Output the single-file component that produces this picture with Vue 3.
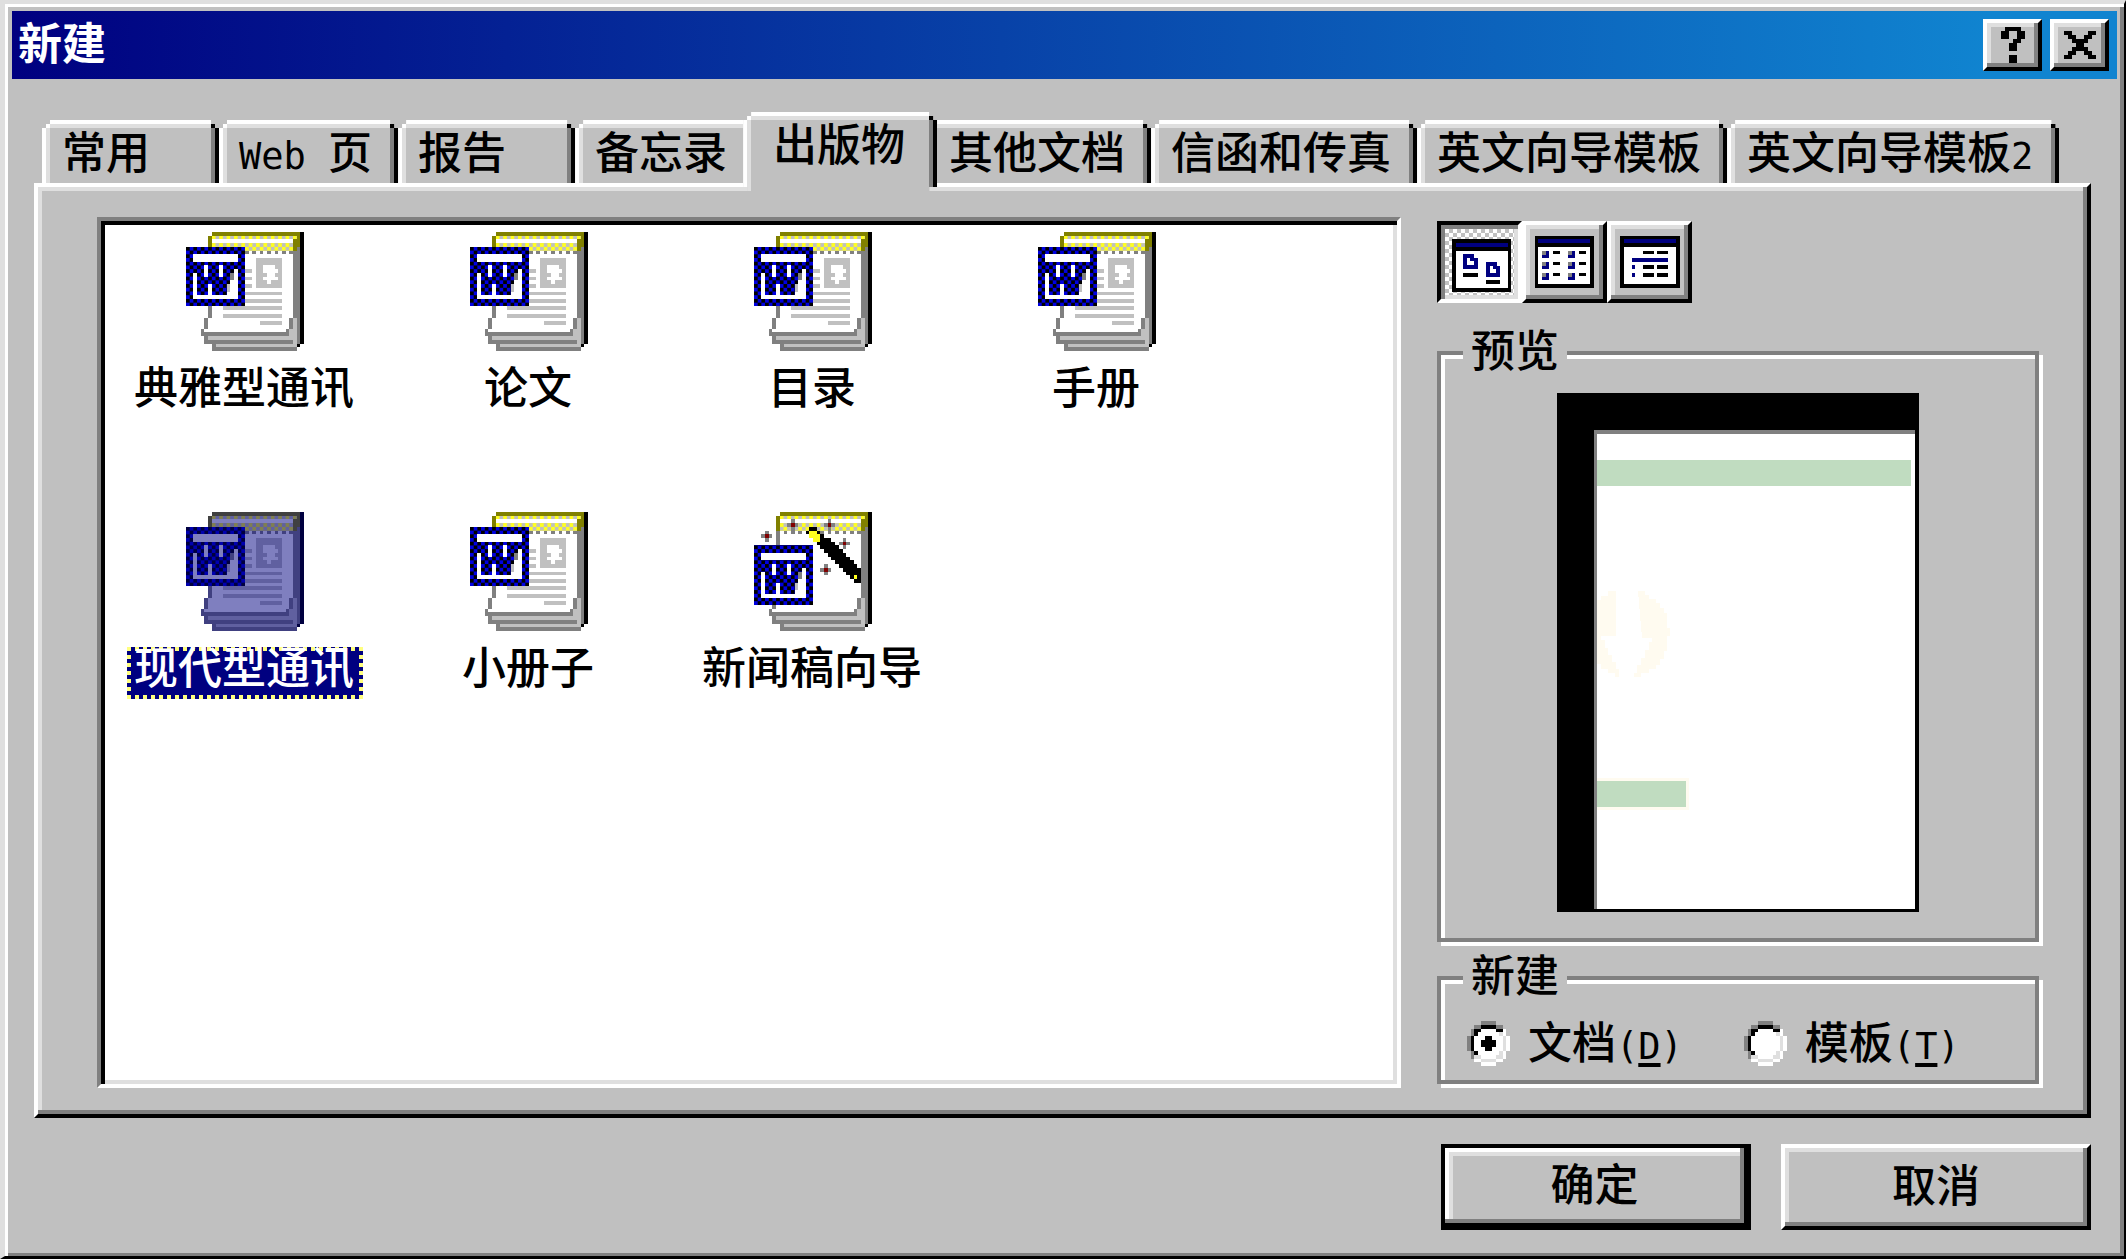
<script setup>
import { ref } from 'vue'

const tabs = ['常用', 'Web 页', '报告', '备忘录', '出版物', '其他文档', '信函和传真', '英文向导模板', '英文向导模板2']
const activeTab = ref('出版物')

const templates = [
  { name: '典雅型通讯' },
  { name: '论文' },
  { name: '目录' },
  { name: '手册' },
  { name: '现代型通讯' },
  { name: '小册子' },
  { name: '新闻稿向导', wizard: true },
]
const selected = ref('现代型通讯')
const kind = ref('doc')

// Splits a caption so that half-width runs get their own narrow face
const split = (s) => s.match(/[\x20-\x7e]+|[^\x20-\x7e]+/g).map((t) => ({ t, latin: /^[\x20-\x7e]/.test(t) }))

const textRows = [[16, 10, 2], [16, 12, 2], [16, 14, 2], [16, 16, 10], [16, 18, 10], [10, 20, 16], [10, 22, 16], [20, 24, 6]]
const stars = [[3, 6], [10, 3], [20, 3], [24, 8], [19, 15]]
const wandRows = Array.from({ length: 12 }, (_, i) => i + 7)
</script>

<template>
  <main class="dialog">
    <svg class="defs" aria-hidden="true">
      <defs>
        <pattern id="blue" width="2" height="2" patternUnits="userSpaceOnUse">
          <path fill="#0000e0" d="M0 0h2v2h-2z" />
          <path d="M0 0h1v1h-1zM1 1h1v1h-1z" />
        </pattern>
        <pattern id="yellow" width="2" height="2" patternUnits="userSpaceOnUse">
          <path fill="#c0c0c0" d="M0 0h2v2h-2z" />
          <path fill="#ffff20" d="M0 0h1v1h-1zM1 1h1v1h-1z" />
        </pattern>
        <g id="wmark">
          <path fill="url(#blue)" d="M0 4h16v16h-16z" />
          <path fill="#fff" d="M2 6h12v2h-12zM5 9h1v3h-1zM9 9h1v3h-1zM2 11h1v6h3v-3h1v3h4v-1h1v-3h1v-3h1v8h-12z" />
          <path fill="#808080" d="M12 11h1v2h-1z" />
          <path fill="#c0c0c0" d="M11 14h1v2h-1z" />
        </g>
        <g id="pad">
          <path d="M31 0h1v30h-1zM30 30h1v1h-1z" />
          <path fill="#808000" d="M7 0h24v4h-1v1h-24v-4h1z" />
          <path fill="#808080" d="M29 5h1v-1h1v26h-2zM6 5h23v18h-23zM5 23h24v3h-24zM4 26h24v2h-24zM5 28h25v2h-25zM7 30h23v2h-23z" />
          <path fill="#fff" d="M7 5h22v18h-1v3h-1v1h-22v-1h1v-3h1z" />
          <path fill="#c0c0c0" d="M29 23h1v8h-22v-1h21v-1h-23v-1h22v-2h1z" />
          <path fill="#808080" d="M28 23h1v3h-1zM27 26h1v1h-1z" />
          <path fill="url(#yellow)" d="M7 1h23v1h-23zM7 3h22v2h-22z" />
          <path fill="#fff" d="M7 2h22v1h-22z" />
          <path fill="#808080" d="M8 5h1v1h-1zM10 5h1v1h-1zM12 5h1v1h-1zM14 5h1v1h-1zM16 5h1v1h-1zM18 5h1v1h-1zM20 5h1v1h-1zM22 5h1v1h-1zM24 5h1v1h-1zM26 5h1v1h-1zM28 5h1v1h-1z" />
        </g>
      </defs>
    </svg>

    <header class="titlebar">
      <h1>新建</h1>
      <button class="cap raised" type="button" aria-label="帮助">
        <svg width="24" height="36" viewBox="0 0 6 9" shape-rendering="crispEdges"><path d="M1 0h4v1h1v2h-1v1h-1v2h-2v-2h1v-1h1v-2h-2v2h-2v-2h1zM2 7h2v2h-2z" /></svg>
      </button>
      <button class="cap raised" type="button" aria-label="关闭">
        <svg width="32" height="28" viewBox="0 0 8 7" shape-rendering="crispEdges"><path d="M0 0h2v1h1v1h2v-1h1v-1h2v1h-1v1h-1v1h-1v1h1v1h1v1h1v1h-2v-1h-1v-1h-2v1h-1v1h-2v-1h1v-1h1v-1h1v-1h-1v-1h-1v-1h-1z" /></svg>
      </button>
    </header>

    <section class="body">
      <nav class="tabs" role="tablist">
        <button v-for="t in tabs" :key="t" type="button" role="tab" class="tab" :class="{ active: t === activeTab }" :aria-selected="t === activeTab" @click="activeTab = t">
          <span v-for="p in split(t)" :key="p.t" :class="{ latin: p.latin }">{{ p.t }}</span>
        </button>
      </nav>

      <div class="panel raised">
        <ul class="list">
          <li v-for="f in templates" :key="f.name">
            <button type="button" class="file" :class="{ selected: f.name === selected }" @click="selected = f.name">
              <svg width="118" height="119" viewBox="0 0 32 32" preserveAspectRatio="none" shape-rendering="crispEdges">
                <use href="#pad" />
                <template v-if="f.wizard">
                  <g v-for="s in stars" :key="s[0]">
                    <path fill="#808080" :d="`M${s[0]} ${s[1] - 1}h1v3h-1zM${s[0] - 1} ${s[1]}h3v1h-3z`" />
                    <path fill="#800000" :d="`M${s[0]} ${s[1]}h1v1h-1z`" />
                  </g>
                  <path d="M15 4h2v1h1v1h1v1h1v1h-4v-1h-1v-1h-1v-1h1z" />
                  <rect v-for="r in wandRows" :key="r" :x="r + 9" :y="r" :width="Math.min(5, 20 - r)" height="1" />
                  <path fill="#ffff20" d="M15 5h2v1h1v2h-2v-1h-1zM27 17h1v1h-1z" />
                  <use href="#wmark" y="5" />
                </template>
                <template v-else>
                  <rect v-for="(l, i) in textRows" :key="i" fill="#c0c0c0" :x="l[0]" :y="l[1]" :width="l[2]" height="1" />
                  <path fill="#c0c0c0" d="M19 7h7v8h-7z" />
                  <path fill="#fff" d="M21 9h3v1h1v1h-1v1h1v1h-2v1h-1v-1h-1v-1h1v-1h-1z" />
                  <use href="#wmark" />
                </template>
                <path v-if="f.name === selected" fill="#000080" fill-opacity=".5" d="M7 0H32V30H31V31H30V32H7V30H5V28H4V26H5V23H6V20H0V4H6V1H7Z" />
              </svg>
              <span class="name">{{ f.name }}</span>
            </button>
          </li>
        </ul>

        <aside class="side">
          <div class="views">
            <button type="button" class="view pressed" aria-label="大图标">
              <svg width="59" height="53" viewBox="66 72 177 159" shape-rendering="crispEdges">
                <path d="M66 72h177v159h-177z" /><path fill="#000080" d="M78 84h156v12h-156z" /><path fill="#fff" d="M78 108h156v111h-156z" />
                <path fill="#000080" d="M99 117h33v12h12v33h-45zM168 141h33v12h9v33h-42z" />
                <path fill="#fff" d="M111 129h9v9h12v12h-21zM180 153h9v9h9v12h-18z" />
                <path d="M99 174h45v12h-45zM168 195h42v12h-42z" />
              </svg>
            </button>
            <button type="button" class="view raised" aria-label="列表">
              <svg width="59" height="52" viewBox="312 63 177 156" shape-rendering="crispEdges">
                <path d="M312 63h177v156h-177z" /><path fill="#000080" d="M321 72h156v12h-156z" /><path fill="#fff" d="M321 96h156v111h-156z" />
                <template v-for="y in [108, 141, 174]" :key="y">
                  <template v-for="x in [333, 411]" :key="x">
                    <rect :x="x" :y="y" width="21" height="21" fill="#000080" />
                    <rect :x="x" :y="y" width="12" height="12" fill="#808080" />
                    <rect :x="x + 33" :y="y" width="21" height="10" />
                  </template>
                </template>
              </svg>
            </button>
            <button type="button" class="view raised" aria-label="详细资料">
              <svg width="60" height="52" viewBox="564 63 180 156" shape-rendering="crispEdges">
                <path d="M564 63h180v156h-180z" /><path fill="#000080" d="M576 72h156v12h-156z" /><path fill="#fff" d="M576 96h156v111h-156z" />
                <path fill="#000080" d="M600 129h108v12h-108zM600 150h9v12h-9zM600 174h9v12h-9z" />
                <path d="M633 108h33v10h-33zM675 108h33v10h-33zM633 150h33v12h-33zM675 150h33v12h-33zM633 174h33v12h-33zM675 174h33v12h-33z" />
              </svg>
            </button>
          </div>

          <fieldset class="group preview">
            <legend>预览</legend>
            <div class="frame">
              <div class="paper">
                <div class="bar wide"></div>
                <svg class="mark" width="73" height="86" viewBox="0 0 73 86" shape-rendering="crispEdges">
                  <path fill="#fffbf0" d="M0 9h4v-4h7v-5h8v45h-15v4h4v8h3v7h4v7h4v7h3v8h-4v-4h-7v-4h-7v-5h-4zM41 0h7v4h4v4h7v4h4v5h4v5h3v15h3v8h-3v15h-3v8h-4v6h-4v4h-7v4h-8v4h-7v-4h3v-8h4v-7h4v-8h4v-8h3v-4h-10z" />
                </svg>
                <div class="bar short"></div>
              </div>
            </div>
          </fieldset>

          <fieldset class="group kind">
            <legend>新建</legend>
            <div class="choices">
              <label v-for="o in [{ v: 'doc', t: '文档', k: 'D' }, { v: 'tpl', t: '模板', k: 'T' }]" :key="o.v">
                <span class="radio">
                  <input v-model="kind" type="radio" name="kind" :value="o.v" />
                  <svg width="43" height="45" viewBox="0 0 12 12" preserveAspectRatio="none" shape-rendering="crispEdges" aria-hidden="true">
                    <path fill="#fff" d="M4 1h4v1h2v2h1v4h-1v2h-2v1h-4v-1h-2v-2h-1v-4h1v-2h2z" />
                    <path fill="#fff" d="M10 2h1v2h1v4h-1v2h-1v1h-2v1h-4v-1h-2v-1h8z" />
                    <path fill="#808080" d="M4 0h4v1h2v1h-8v2h-1v4h1v2h-1v-2h-1v-4h1v-2h1v-1h2z" />
                    <path d="M4 1h4v1h2v1h-2v-1h-4v1h-1v1h-1v4h-1v-4h1v-2h2zM2 8h1v1h-1z" />
                    <path fill="#dfdfdf" d="M9 3h1v1h1v4h-1v2h-2v1h-4v-1h-2v-1h2v1h4v-1h1v-1h1v-4h-1z" />
                    <path v-if="kind === o.v" d="M5 4h2v1h1v2h-1v1h-2v-1h-1v-2h1z" />
                  </svg>
                </span>
                <span>{{ o.t }}<span class="latin">(<u>{{ o.k }}</u>)</span></span>
              </label>
            </div>
          </fieldset>
        </aside>
      </div>

      <footer class="actions">
        <button type="button" class="action default"><span>确定</span></button>
        <button type="button" class="action raised"><span>取消</span></button>
      </footer>
    </section>
  </main>
</template>

<style>
body {
  margin: 0;
  background: #c0c0c0;
}
</style>

<style scoped>
.dialog,
.dialog * {
  box-sizing: border-box;
}
.dialog {
  display: flex;
  flex-direction: column;
  min-height: 100vh;
  padding: 7px 7px 26px;
  border: solid;
  border-width: 4px 2px 3px 5px;
  border-color: #dfdfdf #000 #000 #dfdfdf;
  box-shadow: inset 3px 3px #fff, inset -4px -3px #808080;
  background: #c0c0c0;
  color: #000;
  font: 500 44px/44px "Noto Sans CJK SC", sans-serif;
}
.defs {
  position: absolute;
  width: 0;
  height: 0;
}
button {
  margin: 0;
  padding: 0;
  border: 0;
  border-radius: 0;
  background: #c0c0c0;
  color: inherit;
  font: inherit;
}
svg {
  display: block;
  flex: none;
}
.raised {
  border: 4px solid;
  border-color: #fff #000 #000 #fff;
  box-shadow: inset -4px -4px #808080, inset 4px 4px #dfdfdf;
}
.latin {
  font-family: "DejaVu Sans Mono", monospace;
  font-size: 37px;
  line-height: 0;
  white-space: pre;
}

.titlebar {
  display: flex;
  align-items: center;
  height: 68px;
  padding: 0 8px 0 6px;
  background: linear-gradient(90deg, #000080, #1084d0 94%);
}
.titlebar h1 {
  flex: 1;
  margin: 0;
  padding-bottom: 8px;
  color: #fff;
  font-size: 44px;
  font-weight: 700;
}
.cap {
  display: flex;
  align-items: center;
  justify-content: center;
  width: 59px;
  height: 52px;
  margin-left: 8px;
}

.body {
  flex: 1;
  display: flex;
  flex-direction: column;
  margin: 33px 26px 0 22px;
}
.tabs {
  display: flex;
  align-items: flex-end;
  padding-left: 8px;
}
.tab {
  position: relative;
  min-width: 177px;
  height: 63px;
  padding: 4px 22px 12px 16px;
  border: solid;
  border-width: 4px 4px 0;
  border-color: #fff #000 #fff #fff;
  box-shadow: inset -4px 0 #808080, inset 4px 4px #dfdfdf;
  clip-path: polygon(0 8px, 4px 8px, 4px 4px, 8px 4px, 8px 0, calc(100% - 8px) 0, calc(100% - 8px) 4px, calc(100% - 4px) 4px, calc(100% - 4px) 8px, 100% 8px, 100% 100%, 0 100%);
  line-height: 40px;
  text-align: left;
  white-space: nowrap;
}
.tab::before,
.tab::after {
  content: "";
  position: absolute;
  top: 0;
  left: 0;
  width: 4px;
  height: 4px;
  background: #fff;
}
.tab::after {
  left: auto;
  right: 0;
  background: #000;
}
.tab.active {
  z-index: 1;
  height: 79px;
  margin: 0 -8px -8px -10px;
  padding: 4px 28px 28px 26px;
  clip-path: polygon(0 8px, 4px 8px, 4px 4px, 8px 4px, 8px 0, calc(100% - 8px) 0, calc(100% - 8px) 4px, calc(100% - 4px) 4px, calc(100% - 4px) 8px, 100% 8px, 100% calc(100% - 4px), calc(100% - 8px) calc(100% - 4px), calc(100% - 8px) 100%, 4px 100%, 4px calc(100% - 4px), 0 calc(100% - 4px));
}
.panel {
  flex: 1;
  display: flex;
  gap: 36px;
  padding: 30px 44px 26px 59px;
}
.list {
  flex: 1;
  display: grid;
  grid-template-columns: repeat(auto-fill, 284px);
  grid-auto-rows: 280px;
  margin: 0;
  padding: 0 0 0 2px;
  border: 4px solid;
  border-color: #808080 #fff #fff #808080;
  box-shadow: inset 4px 4px #000, inset -4px -4px #dfdfdf;
  background: #fff;
  list-style: none;
}
.file {
  display: flex;
  flex-direction: column;
  align-items: center;
  width: 100%;
  padding-top: 11px;
  background: none;
}
.name {
  height: 52px;
  margin-top: 16px;
  padding: 0 9px 0 7px;
  line-height: 36px;
}
.selected .name {
  background:
    repeating-linear-gradient(90deg, #ffff80 0 4px, #000080 4px 8px) top / 100% 4px no-repeat,
    repeating-linear-gradient(90deg, #ffff80 0 4px, #000080 4px 8px) bottom / 100% 4px no-repeat,
    repeating-linear-gradient(#ffff80 0 4px, #000080 4px 8px) left / 4px 100% no-repeat,
    repeating-linear-gradient(#ffff80 0 4px, #000080 4px 8px) right / 4px 100% no-repeat,
    #000080;
  color: #fff;
}

.side {
  display: flex;
  flex-direction: column;
  flex: none;
  width: 606px;
  padding: 4px 4px 4px 0;
}
.views {
  display: flex;
  margin-bottom: 28px;
}
.view {
  display: flex;
  align-items: center;
  justify-content: center;
  width: 85px;
  height: 82px;
}
.pressed {
  padding: 6px 0 0 4px;
  border: 4px solid;
  border-color: #000 #fff #fff #000;
  box-shadow: inset 4px 4px #808080, inset -4px -4px #dfdfdf;
  background: repeating-conic-gradient(#c0c0c0 0 25%, #fff 0 50%) 0 0 / 8px 8px;
}
.group {
  min-width: 0;
  margin: 0;
  padding: 0 22px;
  border: 4px solid #808080;
  box-shadow: inset 4px 4px #fff, 4px 4px #fff;
}
legend {
  padding: 0 8px 10px;
  background: #c0c0c0;
  line-height: 34px;
}
.preview {
  flex: 1;
  margin-bottom: 14px;
}
.frame {
  width: 362px;
  height: 519px;
  margin: 18px auto 26px;
  padding: 37px 4px 3px 37px;
  background: #000;
}
.paper {
  height: 100%;
  padding-top: 26px;
  border: solid #808080;
  border-width: 4px 0 0 3px;
  background: #fff;
}
.bar {
  height: 26px;
  background: #c0dcc0;
}
.wide {
  margin-right: 4px;
}
.mark {
  margin: 105px 0 104px;
}
.short {
  width: 89px;
  box-shadow: 0 0 0 3px #fffbf0;
  clip-path: inset(-3px -3px -3px 0);
}
.choices {
  display: flex;
  gap: 61px;
  padding: 21px 0 14px 4px;
}
.choices label {
  display: flex;
  gap: 18px;
  height: 45px;
  line-height: 38px;
  white-space: nowrap;
}
.radio {
  display: grid;
}
.radio > * {
  grid-area: 1 / 1;
}
.radio input {
  width: 43px;
  height: 45px;
  margin: 0;
  appearance: none;
}
.radio svg {
  pointer-events: none;
}
u {
  text-decoration-thickness: 4px;
  text-underline-offset: 4px;
}

.actions {
  display: flex;
  justify-content: flex-end;
  gap: 30px;
  margin-top: 26px;
}
.action {
  width: 310px;
  height: 86px;
  padding-bottom: 8px;
}
.default {
  border: solid #000;
  border-width: 4px 7px 7px 4px;
  box-shadow: inset -4px -4px #808080, inset 4px 4px #fff, inset 8px 8px #dfdfdf;
}
</style>
